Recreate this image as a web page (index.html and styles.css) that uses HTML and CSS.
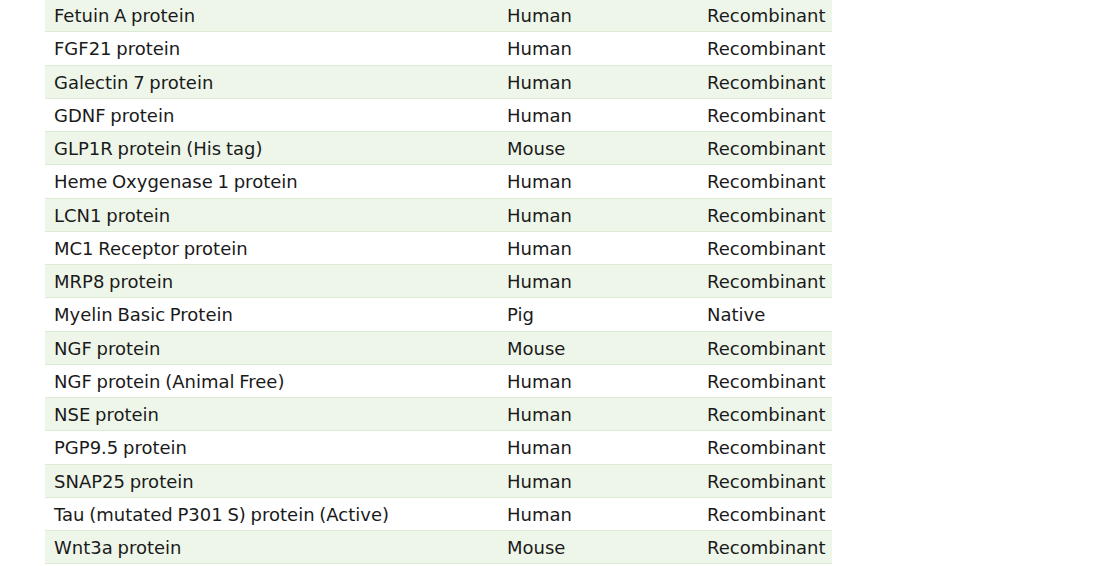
FILE: index.html
```html
<!DOCTYPE html>
<html>
<head>
<meta charset="utf-8">
<link rel="stylesheet" href="styles.css">
</head>
<body>
<div class="table">
  <div class="row alt"><div class="c name">Fetuin A protein</div><div class="c sp">Human</div><div class="c src">Recombinant</div></div>
  <div class="row"><div class="c name">FGF21 protein</div><div class="c sp">Human</div><div class="c src">Recombinant</div></div>
  <div class="row alt"><div class="c name">Galectin 7 protein</div><div class="c sp">Human</div><div class="c src">Recombinant</div></div>
  <div class="row"><div class="c name">GDNF protein</div><div class="c sp">Human</div><div class="c src">Recombinant</div></div>
  <div class="row alt"><div class="c name">GLP1R protein (His tag)</div><div class="c sp">Mouse</div><div class="c src">Recombinant</div></div>
  <div class="row"><div class="c name">Heme Oxygenase 1 protein</div><div class="c sp">Human</div><div class="c src">Recombinant</div></div>
  <div class="row alt"><div class="c name">LCN1 protein</div><div class="c sp">Human</div><div class="c src">Recombinant</div></div>
  <div class="row"><div class="c name">MC1 Receptor protein</div><div class="c sp">Human</div><div class="c src">Recombinant</div></div>
  <div class="row alt"><div class="c name">MRP8 protein</div><div class="c sp">Human</div><div class="c src">Recombinant</div></div>
  <div class="row"><div class="c name">Myelin Basic Protein</div><div class="c sp">Pig</div><div class="c src">Native</div></div>
  <div class="row alt"><div class="c name">NGF protein</div><div class="c sp">Mouse</div><div class="c src">Recombinant</div></div>
  <div class="row"><div class="c name">NGF protein (Animal Free)</div><div class="c sp">Human</div><div class="c src">Recombinant</div></div>
  <div class="row alt"><div class="c name">NSE protein</div><div class="c sp">Human</div><div class="c src">Recombinant</div></div>
  <div class="row"><div class="c name">PGP9.5 protein</div><div class="c sp">Human</div><div class="c src">Recombinant</div></div>
  <div class="row alt"><div class="c name">SNAP25 protein</div><div class="c sp">Human</div><div class="c src">Recombinant</div></div>
  <div class="row"><div class="c name">Tau (mutated P301 S) protein (Active)</div><div class="c sp">Human</div><div class="c src">Recombinant</div></div>
  <div class="row alt"><div class="c name">Wnt3a protein</div><div class="c sp">Mouse</div><div class="c src">Recombinant</div></div>
</div>
</body>
</html>
```
FILE: styles.css
```css
html, body {
  margin: 0;
  padding: 0;
  background: #ffffff;
}
body {
  font-family: "DejaVu Sans", sans-serif;
  font-size: 18px;
  color: #1a1a1a;
}
.table {
  width: 787px;
  margin: -1px 0 0 45px;
  display: flex;
  flex-direction: column;
}
.row {
  display: grid;
  grid-template-columns: 453px 200px 134px;
  height: 33.25px;
  box-sizing: border-box;
  border-bottom: 1px solid #dcecd4;
  align-items: center;
  padding-top: 2px;
}
.row.alt {
  background: #eef6ea;
}
.c {
  white-space: nowrap;
  line-height: 20px;
  word-spacing: -1px;
}
.name { padding-left: 9px; }
.sp { padding-left: 9px; }
.src { padding-left: 9px; }
```
